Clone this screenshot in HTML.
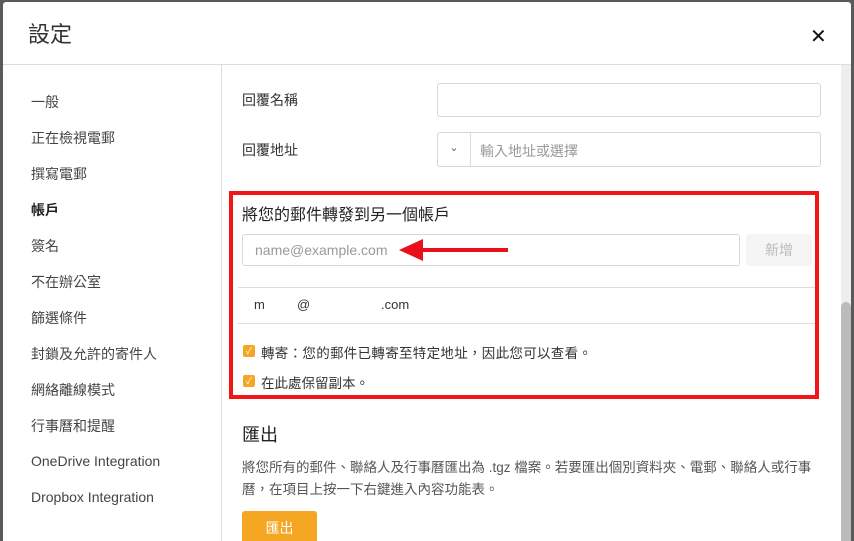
<!DOCTYPE html>
<html><head><meta charset="utf-8"><style>
*{box-sizing:border-box;margin:0;padding:0}
html,body{width:854px;height:541px;overflow:hidden}
body{background:#5a5a5a;font-family:"Liberation Sans","Noto Sans CJK TC",sans-serif;color:#333;position:relative}
.modal{position:absolute;left:3px;top:2px;width:848px;height:560px;background:#fff;border-radius:3px}
.hdr{position:absolute;left:0;top:0;width:848px;height:63px;border-bottom:1px solid #ddd}
.hdr h1{position:absolute;left:25px;top:15px;font-size:22px;font-weight:normal;color:#333}
.x{position:absolute;left:807px;top:22px;font-size:20px;color:#111}
.side{position:absolute;left:0;top:63px;width:219px;height:500px;border-right:1px solid #ddd}
.side div{position:absolute;left:28px;font-size:14px;color:#444}
.a{position:absolute;font-size:14px}
.in{position:absolute;border:1px solid #d6d6d6;border-radius:3px;background:#fff}
.scroll{position:absolute;left:838px;top:63px;width:10px;height:480px;background:#eee}
.thumb{position:absolute;left:838px;top:300px;width:10px;height:245px;background:#bbb;border-radius:5px}
.red{position:absolute;left:226px;top:189px;width:590px;height:208px;border:4px solid #f31616}
.cb{position:absolute;left:240px;width:12px;height:12px;background:#f5a623;border-radius:2px;color:#fff;font-size:9px;line-height:12px;text-align:center}
.ln{position:absolute;left:235px;width:580px;height:1px;background:#ddd}
</style></head><body>
<div class="modal">
<div class="hdr"><h1>設定</h1><div class="x">✕</div></div>
<div class="side">
<div style="top:27px">一般</div>
<div style="top:63px">正在檢視電郵</div>
<div style="top:99px">撰寫電郵</div>
<div style="top:135px;font-weight:bold;color:#222">帳戶</div>
<div style="top:171px">簽名</div>
<div style="top:207px">不在辦公室</div>
<div style="top:243px">篩選條件</div>
<div style="top:279px">封鎖及允許的寄件人</div>
<div style="top:315px">網絡離線模式</div>
<div style="top:351px">行事曆和提醒</div>
<div style="top:388px">OneDrive Integration</div>
<div style="top:424px">Dropbox Integration</div>
</div>
<div class="a" style="left:239px;top:88px">回覆名稱</div>
<div class="in" style="left:434px;top:81px;width:384px;height:34px"></div>
<div class="a" style="left:239px;top:138px">回覆地址</div>
<div class="in" style="left:434px;top:130px;width:384px;height:35px"><span style="position:absolute;left:0;top:0;width:33px;height:33px;border-right:1px solid #ddd;text-align:center;line-height:31px;font-size:11px;color:#666">⌄</span><span style="position:absolute;left:42px;top:8px;font-size:14px;color:#999">輸入地址或選擇</span></div>
<div class="scroll"></div><div class="thumb"></div>
<div class="a" style="left:239px;top:199px;font-size:16px;color:#222">將您的郵件轉發到另一個帳戶</div>
<div class="in" style="left:239px;top:232px;width:498px;height:32px"><span style="position:absolute;left:12px;top:7px;font-size:14px;color:#999">name@example.com</span></div>
<div style="position:absolute;left:743px;top:232px;width:66px;height:32px;background:#f5f5f5;border-radius:3px;text-align:center;line-height:32px;font-size:14px;color:#bbb">新增</div>
<svg style="position:absolute;left:390px;top:235px" width="120" height="26"><path d="M6 13 L30 2 L30 24 Z" fill="#e8101a"/><rect x="28" y="11" width="87" height="4" fill="#e8101a"/></svg>
<div class="ln" style="top:285px"></div>
<div class="a" style="left:251px;top:295px;font-size:13px">m</div>
<div class="a" style="left:294px;top:295px;font-size:13px">@</div>
<div class="a" style="left:378px;top:295px;font-size:13px">.com</div>
<div class="ln" style="top:321px"></div>
<div class="cb" style="top:343px">✓</div>
<div class="a" style="left:258px;top:340px;font-size:13.5px;letter-spacing:0.3px">轉寄：您的郵件已轉寄至特定地址，因此您可以查看。</div>
<div class="cb" style="top:373px">✓</div>
<div class="a" style="left:258px;top:370px;font-size:13.5px">在此處保留副本。</div>
<div class="red"></div>
<div class="a" style="left:239px;top:419px;font-size:18px;color:#222">匯出</div>
<div class="a" style="left:239px;top:455px;font-size:13.5px;line-height:22px;width:570px;color:#555">將您所有的郵件、聯絡人及行事曆匯出為 .tgz 檔案。若要匯出個別資料夾、電郵、聯絡人或行事曆，在項目上按一下右鍵進入內容功能表。</div>
<div style="position:absolute;left:239px;top:509px;width:75px;height:40px;background:#f5a623;border-radius:3px;color:#fff;text-align:center;line-height:34px;font-size:14px">匯出</div>
</div>
</body></html>
